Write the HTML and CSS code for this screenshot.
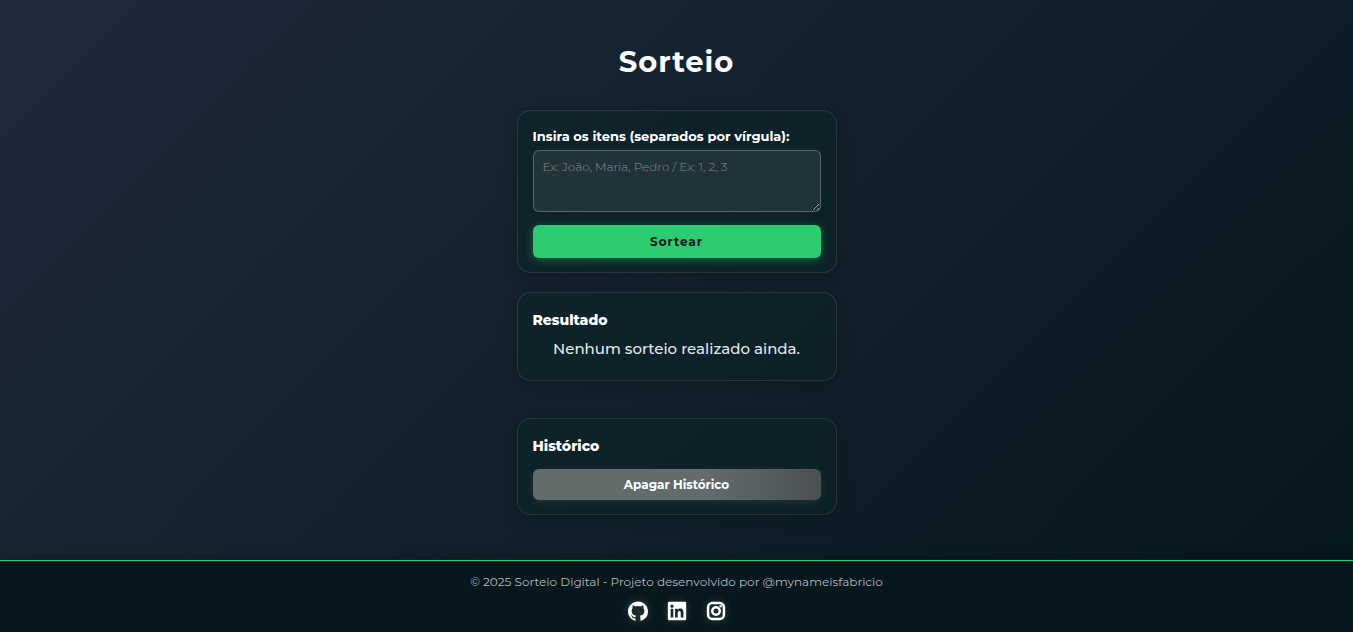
FILE: index.html
```html
<!DOCTYPE html>
<html lang="pt-BR">
<head>
<meta charset="utf-8">
<meta name="viewport" content="width=device-width, initial-scale=1">
<title>Sorteio</title>
<link rel="stylesheet" href="styles.css">
</head>
<body>
<main class="container">
  <h1 class="title">Sorteio</h1>
  <form class="card form">
    <label class="label" for="itens">Insira os itens (separados por vírgula):</label>
    <textarea class="items" id="itens" placeholder="Ex: João, Maria, Pedro / Ex: 1, 2, 3"></textarea>
    <button class="button draw" type="button">Sortear</button>
  </form>
  <section class="card result">
    <h2 class="subtitle">Resultado</h2>
    <p class="message">Nenhum sorteio realizado ainda.</p>
  </section>
  <section class="card history">
    <h2 class="subtitle">Histórico</h2>
    <button class="button clear" type="button">Apagar Histórico</button>
  </section>
</main>
<footer class="footer">
  <p class="credits">© 2025 Sorteio Digital - Projeto desenvolvido por @mynameisfabricio</p>
  <nav class="social">
    <a class="social-link" href="#" aria-label="GitHub">
      <svg viewBox="0 0 24 24" aria-hidden="true"><path d="M12 .5C5.4.5 0 5.8 0 12.400c0 5.300 3.400 9.700 8.200 11.300.6.1.8-.3.8-.6v-2.200c-3.300.7-4-1.400-4-1.400-.6-1.400-1.300-1.800-1.300-1.800-1.100-.7.1-.7.1-.7 1.200.1 1.800 1.200 1.800 1.200 1.100 1.800 2.800 1.300 3.500 1 .1-.8.4-1.300.8-1.600-2.700-.3-5.500-1.300-5.500-5.900 0-1.300.5-2.400 1.200-3.200-.1-.3-.5-1.500.1-3.200 0 0 1-.3 3.300 1.200a11.500 11.500 0 0 1 6 0c2.300-1.500 3.300-1.200 3.300-1.200.7 1.700.2 2.900.1 3.200.8.8 1.200 1.900 1.200 3.200 0 4.600-2.800 5.600-5.500 5.900.4.4.8 1.100.8 2.200v3.300c0 .3.2.7.8.6A11.900 11.900 0 0 0 24 12.400C24 5.800 18.600.5 12 .5Z"/></svg>
    </a>
    <a class="social-link" href="#" aria-label="LinkedIn">
      <svg viewBox="0 0 24 24" aria-hidden="true"><path fill-rule="evenodd" d="M2.500 1h19A1.500 1.500 0 0 1 23 2.500v19a1.500 1.500 0 0 1-1.500 1.500h-19A1.500 1.500 0 0 1 1 21.500v-19A1.500 1.500 0 0 1 2.500 1Zm1.900 8.400v10.300h3.200V9.400ZM6 4.300a1.900 1.900 0 1 0 0 3.800 1.900 1.900 0 0 0 0-3.800ZM9.700 9.400v10.300h3.200v-5.100c0-1.400.3-2.700 1.900-2.700s1.700 1.500 1.700 2.800v5h3.200V14c0-2.800-.6-4.900-3.900-4.900-1.500 0-2.600.8-3 1.700V9.400Z"/></svg>
    </a>
    <a class="social-link" href="#" aria-label="Instagram">
      <svg viewBox="0 0 24 24" aria-hidden="true"><rect class="line" x="2.500" y="2.500" width="19" height="19" rx="5"/><circle class="line" cx="12" cy="12" r="4.500"/><circle cx="17.600" cy="6.400" r="1.500"/></svg>
    </a>
  </nav>
</footer>
</body>
</html>
```
FILE: styles.css
```css
* {
  box-sizing: border-box;
  margin: 0;
  padding: 0;
}

body {
  display: flex;
  flex-direction: column;
  min-height: 100vh;
  font-family: Montserrat, Inter, sans-serif;
  color: #fff;
  background: linear-gradient(135deg, #1f2a3a, #05171e);
}

.container {
  display: flex;
  flex: 1;
  flex-direction: column;
  width: 100%;
  max-width: 320px;
  margin: 0 auto;
  padding: 42px 0 24px;
}

.title {
  margin-bottom: 28px;
  font-size: 29px;
  line-height: 40px;
  font-weight: 700;
  letter-spacing: 1px;
  text-align: center;
}

.card {
  padding: 14px 15px;
  border: 1px solid rgba(255, 255, 255, 0.1);
  border-radius: 14px;
  background: rgba(10, 35, 38, 0.6);
  box-shadow: 0 4px 16px rgba(0, 0, 0, 0.2);
}

.form {
  display: flex;
  flex-direction: column;
  margin-bottom: 19px;
}

.label {
  margin-bottom: 3px;
  font-size: 13px;
  line-height: 22px;
  font-weight: 700;
}

.items {
  width: 100%;
  height: 62px;
  margin-bottom: 13px;
  padding: 8px 9px;
  border: 1px solid rgba(255, 255, 255, 0.25);
  border-radius: 6px;
  background: rgba(255, 255, 255, 0.08);
  color: #fff;
  font-family: inherit;
  font-size: 12px;
  line-height: 16px;
  font-weight: 300;
  resize: vertical;
}

.items::placeholder {
  color: #878c8d;
}

.button {
  display: block;
  width: 100%;
  border: 0;
  border-radius: 6px;
  font-family: inherit;
  font-size: 12px;
  font-weight: 700;
  cursor: pointer;
}

.draw {
  height: 33px;
  background: #2ecc71;
  box-shadow: 0 2px 10px rgba(46, 204, 113, 0.4);
  color: #07191e;
  letter-spacing: 1px;
}

.result {
  min-height: 89px;
  margin-bottom: 37px;
}

.subtitle {
  font-size: 14px;
  line-height: 26px;
  font-weight: 800;
}

.message {
  font-size: 15px;
  line-height: 32px;
  font-weight: 500;
  color: #e4e8e9;
  text-align: center;
}

.history .subtitle {
  margin-bottom: 10px;
}

.clear {
  height: 31px;
  background: linear-gradient(90deg, #616c6b 60%, #4b5051);
  box-shadow: 0 2px 8px rgba(150, 170, 170, 0.15);
  color: #fff;
}

.footer {
  padding: 12px 16px 11px;
  border-top: 1px solid #2ecc71;
  background: #06171d;
  box-shadow: 0 -2px 12px rgba(0, 0, 0, 0.2);
  text-align: center;
}

.credits {
  margin-bottom: 10px;
  font-size: 12px;
  line-height: 18px;
  color: #b5babb;
}

.social {
  display: flex;
  justify-content: center;
  gap: 19px;
}

.social-link {
  width: 20px;
  height: 20px;
  border-radius: 6px;
  background: rgba(255, 255, 255, 0.08);
  box-shadow: 0 0 8px rgba(255, 255, 255, 0.15);
  color: #fff;
}

.social-link svg {
  display: block;
  width: 20px;
  height: 20px;
  fill: currentColor;
}

.social-link .line {
  fill: none;
  stroke: currentColor;
  stroke-width: 3;
}
```
